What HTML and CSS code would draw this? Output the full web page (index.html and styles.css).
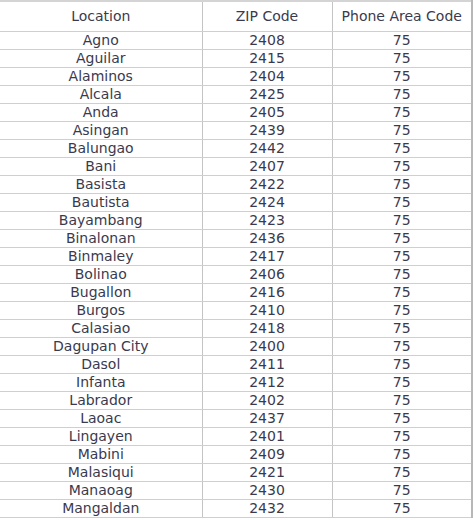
FILE: index.html
```html
<!DOCTYPE html>
<html>
<head>
<meta charset="utf-8">
<link rel="stylesheet" href="styles.css">
</head>
<body>
<table class="zip-table">
<colgroup><col class="c-loc"><col class="c-zip"><col class="c-area"></colgroup>
<thead>
<tr><th>Location</th><th>ZIP Code</th><th>Phone Area Code</th></tr>
</thead>
<tbody>
<tr><td>Agno</td><td>2408</td><td>75</td></tr>
<tr><td>Aguilar</td><td>2415</td><td>75</td></tr>
<tr><td>Alaminos</td><td>2404</td><td>75</td></tr>
<tr><td>Alcala</td><td>2425</td><td>75</td></tr>
<tr><td>Anda</td><td>2405</td><td>75</td></tr>
<tr><td>Asingan</td><td>2439</td><td>75</td></tr>
<tr><td>Balungao</td><td>2442</td><td>75</td></tr>
<tr><td>Bani</td><td>2407</td><td>75</td></tr>
<tr><td>Basista</td><td>2422</td><td>75</td></tr>
<tr><td>Bautista</td><td>2424</td><td>75</td></tr>
<tr><td>Bayambang</td><td>2423</td><td>75</td></tr>
<tr><td>Binalonan</td><td>2436</td><td>75</td></tr>
<tr><td>Binmaley</td><td>2417</td><td>75</td></tr>
<tr><td>Bolinao</td><td>2406</td><td>75</td></tr>
<tr><td>Bugallon</td><td>2416</td><td>75</td></tr>
<tr><td>Burgos</td><td>2410</td><td>75</td></tr>
<tr><td>Calasiao</td><td>2418</td><td>75</td></tr>
<tr><td>Dagupan City</td><td>2400</td><td>75</td></tr>
<tr><td>Dasol</td><td>2411</td><td>75</td></tr>
<tr><td>Infanta</td><td>2412</td><td>75</td></tr>
<tr><td>Labrador</td><td>2402</td><td>75</td></tr>
<tr><td>Laoac</td><td>2437</td><td>75</td></tr>
<tr><td>Lingayen</td><td>2401</td><td>75</td></tr>
<tr><td>Mabini</td><td>2409</td><td>75</td></tr>
<tr><td>Malasiqui</td><td>2421</td><td>75</td></tr>
<tr><td>Manaoag</td><td>2430</td><td>75</td></tr>
<tr><td>Mangaldan</td><td>2432</td><td>75</td></tr>
</tbody>
</table>
</body>
</html>
```
FILE: styles.css
```css
html, body {
  margin: 0;
  padding: 0;
  background: #ffffff;
}
body {
  font-family: "DejaVu Sans", Verdana, sans-serif;
  color: #3a3a4e;
}
.zip-table {
  border-collapse: collapse;
  table-layout: fixed;
  width: 472px;
  border-top: 2px solid #d4d4d4;
  border-right: 2px solid #b8b8b8;
}
.c-loc { width: 202px; }
.c-zip { width: 130px; }
.c-area { width: 140px; }
.zip-table th,
.zip-table td {
  text-align: center;
  font-size: 14px;
  font-weight: normal;
  padding: 0;
  border-bottom: 1px solid #cfcfcf;
  border-left: 1px solid #c4c4c4;
  white-space: nowrap;
}
.zip-table th:first-child,
.zip-table td:first-child {
  border-left: none;
}
.zip-table th {
  height: 29px;
  line-height: 29px;
}
.zip-table td {
  height: 17px;
  line-height: 17px;
}
```
